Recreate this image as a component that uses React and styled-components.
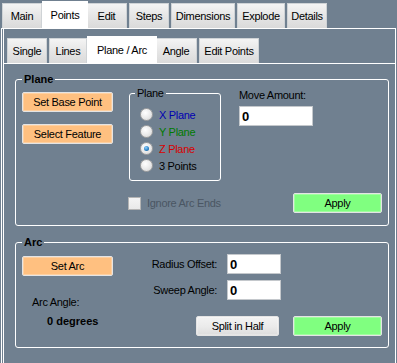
import React from "react";
import styled, { createGlobalStyle } from "styled-components";

const GlobalStyle = createGlobalStyle`
  html, body {
    margin: 0;
    padding: 0;
    background: #708090;
  }
  body {
    font-family: "Liberation Sans", Arial, sans-serif;
    font-size: 11px;
    letter-spacing: -0.3px;
    color: #000;
  }
`;

const Window = styled.div`
  width: 397px;
  height: 363px;
  overflow: hidden;
  background: #708090;
  display: flex;
  flex-direction: column;
`;

const TabStrip = styled.div`
  display: flex;
  align-items: flex-end;
  flex-shrink: 0;
  height: ${(p) => p.$h}px;
  padding-left: ${(p) => p.$pad}px;
`;

const Tab = styled.div`
  box-sizing: border-box;
  position: relative;
  display: flex;
  align-items: center;
  justify-content: center;
  white-space: nowrap;
  height: 25px;
  width: ${(p) => p.$w - 2}px;
  margin-right: 2px;
  border: 1px solid #cfd3d6;
  border-bottom: none;
  background: linear-gradient(#f4f4f4, #e7e7e7 45%, #dadada);

  &[data-active="true"] {
    z-index: 1;
    height: 28px;
    width: ${(p) => p.$w + 4}px;
    margin: 0 -2px -1px -2px;
    padding-bottom: 2px;
    background: #fff;
    border-color: #fff;
  }
`;

const Panel = styled.div`
  flex: 1;
  display: flex;
  width: 395px;
  margin-left: 1px;
  box-sizing: border-box;
  border: 1px solid #fff;
  border-bottom: none;
  padding-left: 1px;
`;

const Page = styled.div`
  flex: 1;
  display: flex;
  flex-direction: column;
  border-left: 1px solid #fff;
`;

const InnerPanel = styled.div`
  flex: 1;
  border-top: 1px solid #fff;
  padding: 8px 0 0 11px;
`;

const Group = styled.fieldset`
  box-sizing: border-box;
  width: ${(p) => p.$w}px;
  margin: ${(p) => p.$mt || 0}px 0 0 0;
  padding: 0 ${(p) => p.$px}px ${(p) => p.$pb}px ${(p) => p.$px}px;
  border: 1px solid #fff;
  border-radius: 3px;
  min-width: 0;
`;

const GroupTitle = styled.legend`
  padding: 0 2px;
  margin-left: ${(p) => p.$ml || 0}px;
  line-height: 14px;
  font-size: 11px;
  font-weight: ${(p) => (p.$bold ? "bold" : "normal")};
  letter-spacing: ${(p) => (p.$bold ? "0" : "-0.3px")};
`;

const TopRow = styled.div`
  display: flex;
  align-items: flex-start;
`;

const ButtonColumn = styled.div`
  display: flex;
  flex-direction: column;
  gap: 12px;
  margin-top: 6px;
`;

const Button = styled.button`
  box-sizing: border-box;
  width: ${(p) => p.$w}px;
  height: 20px;
  padding: 0;
  font-family: inherit;
  font-size: 11px;
  letter-spacing: -0.3px;
  color: #000;
  border: 1px solid #e4e4e4;
  border-radius: 2px;
  box-shadow: inset 0 0 0 1px rgba(255, 255, 255, 0.25);
  background: ${(p) =>
    p.$tone === "orange"
      ? "#ffc080"
      : p.$tone === "green"
      ? "#80ff80"
      : "linear-gradient(#f3f3f3, #ebebeb 50%, #dddddd)"};
`;

const RadioList = styled.div`
  display: flex;
  flex-direction: column;
  padding: 6px 0 6px 0;
`;

const RadioRow = styled.label`
  display: flex;
  align-items: center;
  gap: 6px;
  height: 17px;
  color: ${(p) => p.$color};
`;

const RadioDot = styled.span`
  box-sizing: border-box;
  width: 13px;
  height: 13px;
  border-radius: 50%;
  border: 1px solid #a2a2a2;
  background: radial-gradient(circle at 40% 35%, #ffffff, #e9e9e9 55%, #cfcfcf);
  display: flex;
  align-items: center;
  justify-content: center;

  &::after {
    content: "";
    display: ${(p) => (p.$on ? "block" : "none")};
    width: 5px;
    height: 5px;
    border-radius: 50%;
    background: radial-gradient(circle at 40% 35%, #8fd0ff, #2a7fc0 60%, #0b4a80);
  }
`;

const MoveColumn = styled.div`
  display: flex;
  flex-direction: column;
  margin: 3px 0 0 18px;
`;

const Label = styled.div`
  line-height: 13px;
  white-space: nowrap;
`;

const Input = styled.input`
  box-sizing: border-box;
  width: ${(p) => p.$w}px;
  height: 20px;
  margin-top: ${(p) => p.$mt || 0}px;
  padding: 0 0 0 2px;
  border: 1px solid #c4c8cc;
  background: #fff;
  font-family: "Liberation Sans", Arial, sans-serif;
  font-weight: bold;
  font-size: 13px;
  color: #000;
  outline: none;
`;

const BottomRow = styled.div`
  display: flex;
  align-items: center;
  height: 20px;
  margin-top: 12px;
  padding-left: 106px;
`;

const CheckBox = styled.span`
  box-sizing: border-box;
  width: 13px;
  height: 13px;
  border: 1px solid #b4b4b4;
  background: linear-gradient(#f4f4f4, #e9e9e9);
`;

const DisabledText = styled.span`
  margin-left: 6px;
  color: #4a5663;
`;

const Spacer = styled.div`
  flex: 1;
`;

const ArcBody = styled.div`
  display: flex;
`;

const ArcLeft = styled.div`
  width: 128px;
  display: flex;
  flex-direction: column;
  align-items: flex-start;
`;

const ArcAngleLabel = styled.div`
  line-height: 13px;
  margin: ${(p) => p.$mt}px 0 0 ${(p) => p.$ml}px;
  font-weight: ${(p) => (p.$bold ? "bold" : "normal")};
  letter-spacing: ${(p) => (p.$bold ? "0" : "-0.3px")};
`;

const ArcRight = styled.div`
  flex: 1;
  display: flex;
  flex-direction: column;
  padding-top: 5px;
`;

const FieldRow = styled.div`
  display: flex;
  align-items: center;
  height: 20px;
  margin-top: ${(p) => p.$mt || 0}px;
`;

const FieldLabel = styled.div`
  box-sizing: border-box;
  width: 77px;
  padding-right: 10px;
  text-align: right;
  white-space: nowrap;
`;

const ButtonRow = styled.div`
  display: flex;
  justify-content: flex-end;
  gap: 14px;
  margin-top: 16px;
`;

const mainTabs = [
  ["Main", 42],
  ["Points", 42],
  ["Edit", 43],
  ["Steps", 42],
  ["Dimensions", 66],
  ["Explode", 50],
  ["Details", 42],
];

const pointTabs = [
  ["Single", 42],
  ["Lines", 40],
  ["Plane / Arc", 66],
  ["Angle", 44],
  ["Edit Points", 62],
];

const planes = [
  ["X Plane", "#0000b0"],
  ["Y Plane", "#007a00"],
  ["Z Plane", "#d80000"],
  ["3 Points", "#000"],
];

export default function App() {
  return (
    <Window>
      <GlobalStyle />
      <TabStrip $h={28} $pad={2}>
        {mainTabs.map(([name, w]) => (
          <Tab key={name} $w={w} data-active={name === "Points"}>
            {name}
          </Tab>
        ))}
      </TabStrip>
      <Panel>
        <Page>
          <TabStrip $h={34} $pad={3}>
            {pointTabs.map(([name, w]) => (
              <Tab key={name} $w={w} data-active={name === "Plane / Arc"}>
                {name}
              </Tab>
            ))}
          </TabStrip>
          <InnerPanel>
            <Group $w={374} $px={6} $pb={12}>
              <GroupTitle $bold>Plane</GroupTitle>
              <TopRow>
                <ButtonColumn>
                  <Button $w={91} $tone="orange">Set Base Point</Button>
                  <Button $w={91} $tone="orange">Select Feature</Button>
                </ButtonColumn>
                <Group $w={92} $px={10} $pb={0} style={{ marginLeft: 16 }}>
                  <GroupTitle $ml={-5}>Plane</GroupTitle>
                  <RadioList>
                    {planes.map(([name, color]) => (
                      <RadioRow key={name} $color={color}>
                        <RadioDot $on={name === "Z Plane"} />
                        {name}
                      </RadioRow>
                    ))}
                  </RadioList>
                </Group>
                <MoveColumn>
                  <Label>Move Amount:</Label>
                  <Input $w={74} $mt={4} defaultValue="0" />
                </MoveColumn>
              </TopRow>
              <BottomRow>
                <CheckBox />
                <DisabledText>Ignore Arc Ends</DisabledText>
                <Spacer />
                <Button $w={89} $tone="green">Apply</Button>
              </BottomRow>
            </Group>

            <Group $w={374} $px={6} $pb={11} $mt={9}>
              <GroupTitle $bold>Arc</GroupTitle>
              <ArcBody>
                <ArcLeft>
                  <Button $w={91} $tone="orange" style={{ marginTop: 7 }}>
                    Set Arc
                  </Button>
                  <ArcAngleLabel $mt={20} $ml={10}>Arc Angle:</ArcAngleLabel>
                  <ArcAngleLabel $mt={6} $ml={25} $bold>0 degrees</ArcAngleLabel>
                </ArcLeft>
                <ArcRight>
                  <FieldRow>
                    <FieldLabel>Radius Offset:</FieldLabel>
                    <Input $w={54} defaultValue="0" />
                  </FieldRow>
                  <FieldRow $mt={6}>
                    <FieldLabel>Sweep Angle:</FieldLabel>
                    <Input $w={54} defaultValue="0" />
                  </FieldRow>
                  <ButtonRow>
                    <Button $w={83}>Split in Half</Button>
                    <Button $w={89} $tone="green">Apply</Button>
                  </ButtonRow>
                </ArcRight>
              </ArcBody>
            </Group>
          </InnerPanel>
        </Page>
      </Panel>
    </Window>
  );
}
